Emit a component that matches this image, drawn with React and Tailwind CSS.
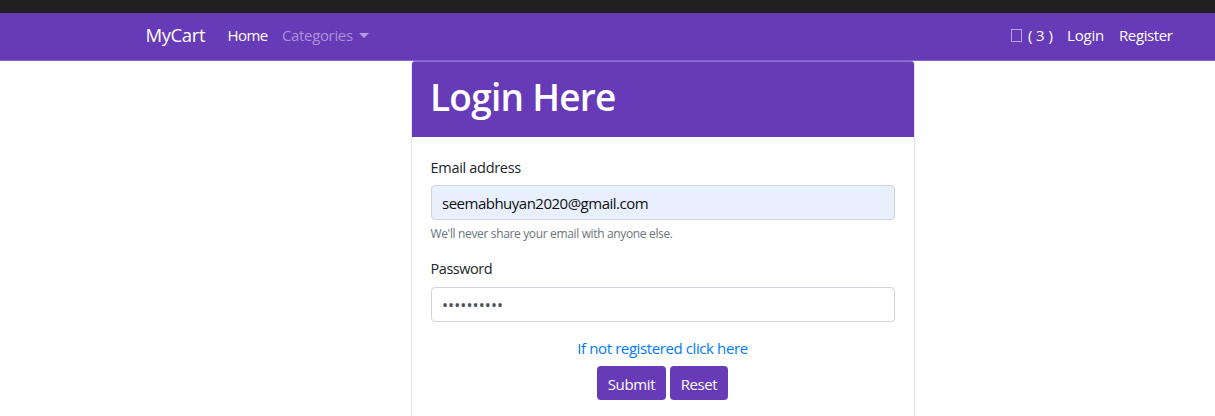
import React from "react";

function Navbar() {
  return (
    <nav className="flex h-12 items-center border-b border-[#8a68c8] bg-[#673ab7] pl-[145.5px] pr-[42px] pb-[3px] text-[15px] text-white whitespace-nowrap">
      <a className="w-[82px] text-[18.5px] tracking-[-0.4px]">MyCart</a>
      <a className="w-[54.5px] tracking-[-0.6px]">Home</a>
      <a className="flex items-center text-[#ab91d7]">
        <span className="w-[77px] tracking-[-0.35px]">Categories</span>
        <span className="h-0 w-0 border-x-[5px] border-t-[5px] border-x-transparent border-t-[#b39ddb]" />
      </a>
      <div className="ml-auto flex items-center">
        <a className="flex w-[56px] items-center">
          <span className="mr-[6px] h-[13px] w-[11px] border border-[#b9a2df]" />
          <span className="tracking-[-0.1px]">( 3 )</span>
        </a>
        <a className="w-[52px] tracking-[-0.2px]">Login</a>
        <a className="w-[54px] tracking-[-0.4px]">Register</a>
      </div>
    </nav>
  );
}

function LoginCard() {
  return (
    <section className="ml-[411px] h-[355px] w-[504px] rounded-t-[4px] border-x border-[#e3e3e3] bg-white">
      <header className="h-[76px] rounded-t-[3px] border-t border-[#8f6fca] bg-[#673ab7] pl-[18px] pt-[12px]">
        <h1 className="text-[37px] font-semibold leading-[46px] tracking-[-0.75px] text-white">Login Here</h1>
      </header>
      <form className="flex flex-col px-[19px] pt-[19px] text-[15px] text-[#212529]">
        <label className="-ml-[0.5px] h-[29px] text-[14.5px] leading-[24px] tracking-[-0.3px]">Email address</label>
        <input
          type="email"
          defaultValue="seemabhuyan2020@gmail.com"
          className="h-[35px] w-[464px] rounded-[4px] border border-[#ced4da] bg-[#e8f0fe] px-[10px] tracking-[-0.5px] text-[#111111] outline-none"
        />
        <small className="-ml-[0.5px] mt-[4px] h-[19px] text-[12px] leading-[19px] tracking-[-0.35px] text-[#6c757d]">
          We'll never share your email with anyone else.
        </small>
        <label className="-ml-[0.5px] mt-[14px] h-[30px] text-[14.5px] leading-[24px] tracking-[-0.45px]">Password</label>
        <input
          type="password"
          defaultValue="cart202020"
          className="h-[35px] w-[464px] rounded-[4px] border border-[#ced4da] bg-white px-[10px] text-[16px] tracking-[0.1px] text-[#495057] outline-none"
        />
        <a className="mt-[14px] mr-[1px] text-center leading-[24px] tracking-[-0.4px] text-[#007bff]">
          If not registered click here
        </a>
        <div className="mt-[6px] mr-[2px] flex justify-center gap-1 text-white">
          <button type="button" className="h-[34px] w-[69px] rounded-[4px] bg-[#673ab7] pl-[1px] pt-[2px] tracking-[-0.35px]">Submit</button>
          <button type="button" className="h-[34px] w-[58px] rounded-[4px] bg-[#673ab7] pl-[1px] pt-[2px] tracking-[-0.45px]">Reset</button>
        </div>
      </form>
    </section>
  );
}

export default function App() {
  return (
    <main className="h-[416px] w-[1215px] overflow-hidden bg-white font-['Open_Sans','Noto_Sans',sans-serif]">
      <div className="h-[13px] bg-[#202020]" />
      <Navbar />
      <LoginCard />
    </main>
  );
}
